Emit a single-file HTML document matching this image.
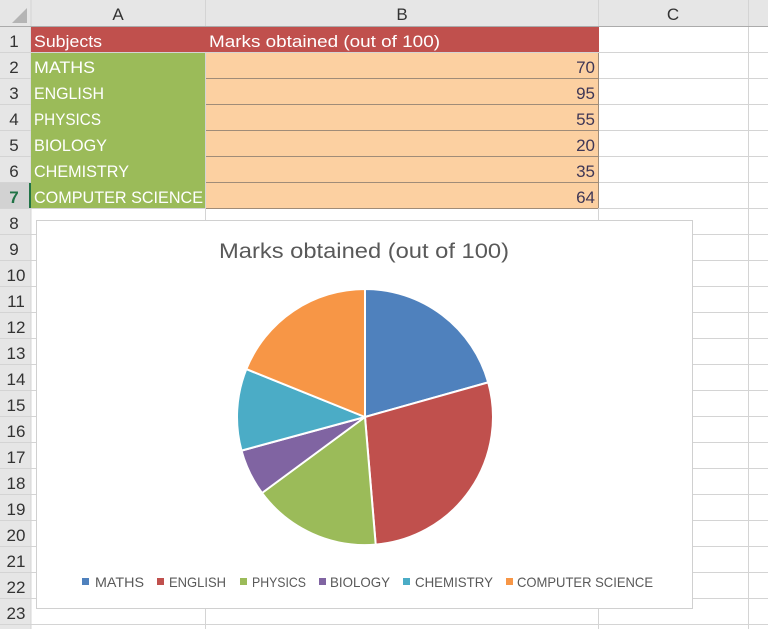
<!DOCTYPE html>
<html><head><meta charset="utf-8"><style>html,body{margin:0;padding:0;background:#fff;overflow:hidden}svg{display:block}</style></head>
<body>
<svg width="768" height="629" xmlns="http://www.w3.org/2000/svg" font-family="Liberation Sans, sans-serif">
<rect width="768" height="629" fill="#fff"/>
<!-- headers -->
<rect x="0" y="0" width="768" height="26" fill="#e6e6e6"/>
<rect x="0" y="0" width="31" height="629" fill="#e6e6e6"/>
<polygon points="27,8 27,23 12,23" fill="#b4b4b4"/>
<!-- grid -->
<g stroke="#d4d4d4" stroke-width="1">
<line x1="31" y1="0" x2="31" y2="629"/>
<line x1="205.5" y1="0" x2="205.5" y2="629"/>
<line x1="598.5" y1="0" x2="598.5" y2="629"/>
<line x1="748.5" y1="0" x2="748.5" y2="629"/>
<line x1="0" y1="26.5" x2="768" y2="26.5" stroke="#ababab"/>
</g>
<g stroke="#d4d4d4">
<line x1="0" y1="52.5" x2="768" y2="52.5"/><line x1="0" y1="78.5" x2="768" y2="78.5"/><line x1="0" y1="104.5" x2="768" y2="104.5"/><line x1="0" y1="130.5" x2="768" y2="130.5"/><line x1="0" y1="156.5" x2="768" y2="156.5"/><line x1="0" y1="182.5" x2="768" y2="182.5"/><line x1="0" y1="208.5" x2="768" y2="208.5"/><line x1="0" y1="234.5" x2="768" y2="234.5"/><line x1="0" y1="260.5" x2="768" y2="260.5"/><line x1="0" y1="286.5" x2="768" y2="286.5"/><line x1="0" y1="312.5" x2="768" y2="312.5"/><line x1="0" y1="338.5" x2="768" y2="338.5"/><line x1="0" y1="364.5" x2="768" y2="364.5"/><line x1="0" y1="390.5" x2="768" y2="390.5"/><line x1="0" y1="416.5" x2="768" y2="416.5"/><line x1="0" y1="442.5" x2="768" y2="442.5"/><line x1="0" y1="468.5" x2="768" y2="468.5"/><line x1="0" y1="494.5" x2="768" y2="494.5"/><line x1="0" y1="520.5" x2="768" y2="520.5"/><line x1="0" y1="546.5" x2="768" y2="546.5"/><line x1="0" y1="572.5" x2="768" y2="572.5"/><line x1="0" y1="598.5" x2="768" y2="598.5"/><line x1="0" y1="624.5" x2="768" y2="624.5"/>
</g>
<rect x="0" y="183" width="31" height="25" fill="#d2d2d2"/>
<rect x="29" y="183" width="2" height="25" fill="#217346"/>
<g font-size="17" fill="#333" text-anchor="middle">
<text x="118" y="20">A</text><text x="402" y="20">B</text><text x="673" y="20">C</text>
</g>
<g font-size="17" fill="#333" text-anchor="middle">
<text x="14" y="47">1</text><text x="14" y="73">2</text><text x="14" y="99">3</text><text x="14" y="125">4</text><text x="14" y="151">5</text><text x="14" y="177">6</text><text x="14" y="203" fill="#217346" font-weight="bold">7</text><text x="14" y="229">8</text><text x="14" y="255">9</text>
<text x="16" y="281">10</text><text x="16" y="307">11</text><text x="16" y="333">12</text><text x="16" y="359">13</text><text x="16" y="385">14</text><text x="16" y="411">15</text><text x="16" y="437">16</text><text x="16" y="463">17</text><text x="16" y="489">18</text><text x="16" y="515">19</text><text x="16" y="541">20</text><text x="16" y="567">21</text><text x="16" y="593">22</text><text x="16" y="619">23</text>
</g>
<!-- table cells -->
<rect x="31" y="27" width="568" height="25" fill="#c0504d"/>
<rect x="31" y="53" width="174" height="155" fill="#9bbb59"/>
<rect x="206" y="53" width="392" height="155" fill="#fcd0a1"/>
<g stroke="#a08c78" stroke-width="1">
<line x1="206" y1="78.5" x2="598" y2="78.5"/><line x1="206" y1="104.5" x2="598" y2="104.5"/><line x1="206" y1="130.5" x2="598" y2="130.5"/><line x1="206" y1="156.5" x2="598" y2="156.5"/><line x1="206" y1="182.5" x2="598" y2="182.5"/><line x1="206" y1="208.5" x2="598" y2="208.5"/><line x1="598.5" y1="53" x2="598.5" y2="208"/>
</g>
<g font-size="17" fill="#fff">
<text x="34" y="47" textLength="68" lengthAdjust="spacingAndGlyphs">Subjects</text>
<text x="209" y="47" textLength="231" lengthAdjust="spacingAndGlyphs">Marks obtained (out of 100)</text>
<text x="34" y="73" textLength="61" lengthAdjust="spacingAndGlyphs">MATHS</text>
<text x="34" y="99" textLength="70" lengthAdjust="spacingAndGlyphs">ENGLISH</text>
<text x="34" y="125" textLength="67" lengthAdjust="spacingAndGlyphs">PHYSICS</text>
<text x="34" y="151" textLength="73" lengthAdjust="spacingAndGlyphs">BIOLOGY</text>
<text x="34" y="177" textLength="95" lengthAdjust="spacingAndGlyphs">CHEMISTRY</text>
<text x="34" y="203" textLength="169" lengthAdjust="spacingAndGlyphs">COMPUTER SCIENCE</text>
</g>
<g font-size="17" fill="#3f3756" text-anchor="end">
<text x="595" y="73">70</text><text x="595" y="99">95</text><text x="595" y="125">55</text><text x="595" y="151">20</text><text x="595" y="177">35</text><text x="595" y="203">64</text>
</g>
<!-- chart -->
<rect x="36.5" y="220.5" width="656" height="388" fill="#fff" stroke="#d0d0d0"/>
<text x="364" y="258" font-size="21" fill="#595959" text-anchor="middle" textLength="290" lengthAdjust="spacingAndGlyphs">Marks obtained (out of 100)</text>
<g stroke="#fff" stroke-width="2" stroke-linejoin="round">
<path d="M365,417 L365,289 A128,128 0 0 1 488.2,382.4 Z" fill="#4f81bd"/>
<path d="M365,417 L488.2,382.4 A128,128 0 0 1 375.7,544.6 Z" fill="#c0504d"/>
<path d="M365,417 L375.7,544.6 A128,128 0 0 1 262,493 Z" fill="#9bbb59"/>
<path d="M365,417 L262,493 A128,128 0 0 1 241.5,450.6 Z" fill="#8064a2"/>
<path d="M365,417 L241.5,450.6 A128,128 0 0 1 246.3,369.1 Z" fill="#4bacc6"/>
<path d="M365,417 L246.3,369.1 A128,128 0 0 1 365,289 Z" fill="#f79646"/>
</g>
<g font-size="14" fill="#595959">
<rect x="82" y="578" width="7" height="7" fill="#4f81bd"/><text x="95" y="587" textLength="49" lengthAdjust="spacingAndGlyphs">MATHS</text>
<rect x="157" y="578" width="7" height="7" fill="#c0504d"/><text x="169" y="587" textLength="57" lengthAdjust="spacingAndGlyphs">ENGLISH</text>
<rect x="240" y="578" width="7" height="7" fill="#9bbb59"/><text x="252" y="587" textLength="54" lengthAdjust="spacingAndGlyphs">PHYSICS</text>
<rect x="319" y="578" width="7" height="7" fill="#8064a2"/><text x="330" y="587" textLength="60" lengthAdjust="spacingAndGlyphs">BIOLOGY</text>
<rect x="403" y="578" width="7" height="7" fill="#4bacc6"/><text x="415" y="587" textLength="78" lengthAdjust="spacingAndGlyphs">CHEMISTRY</text>
<rect x="506" y="578" width="7" height="7" fill="#f79646"/><text x="517" y="587" textLength="136" lengthAdjust="spacingAndGlyphs">COMPUTER SCIENCE</text>
</g>
</svg>
</body></html>
